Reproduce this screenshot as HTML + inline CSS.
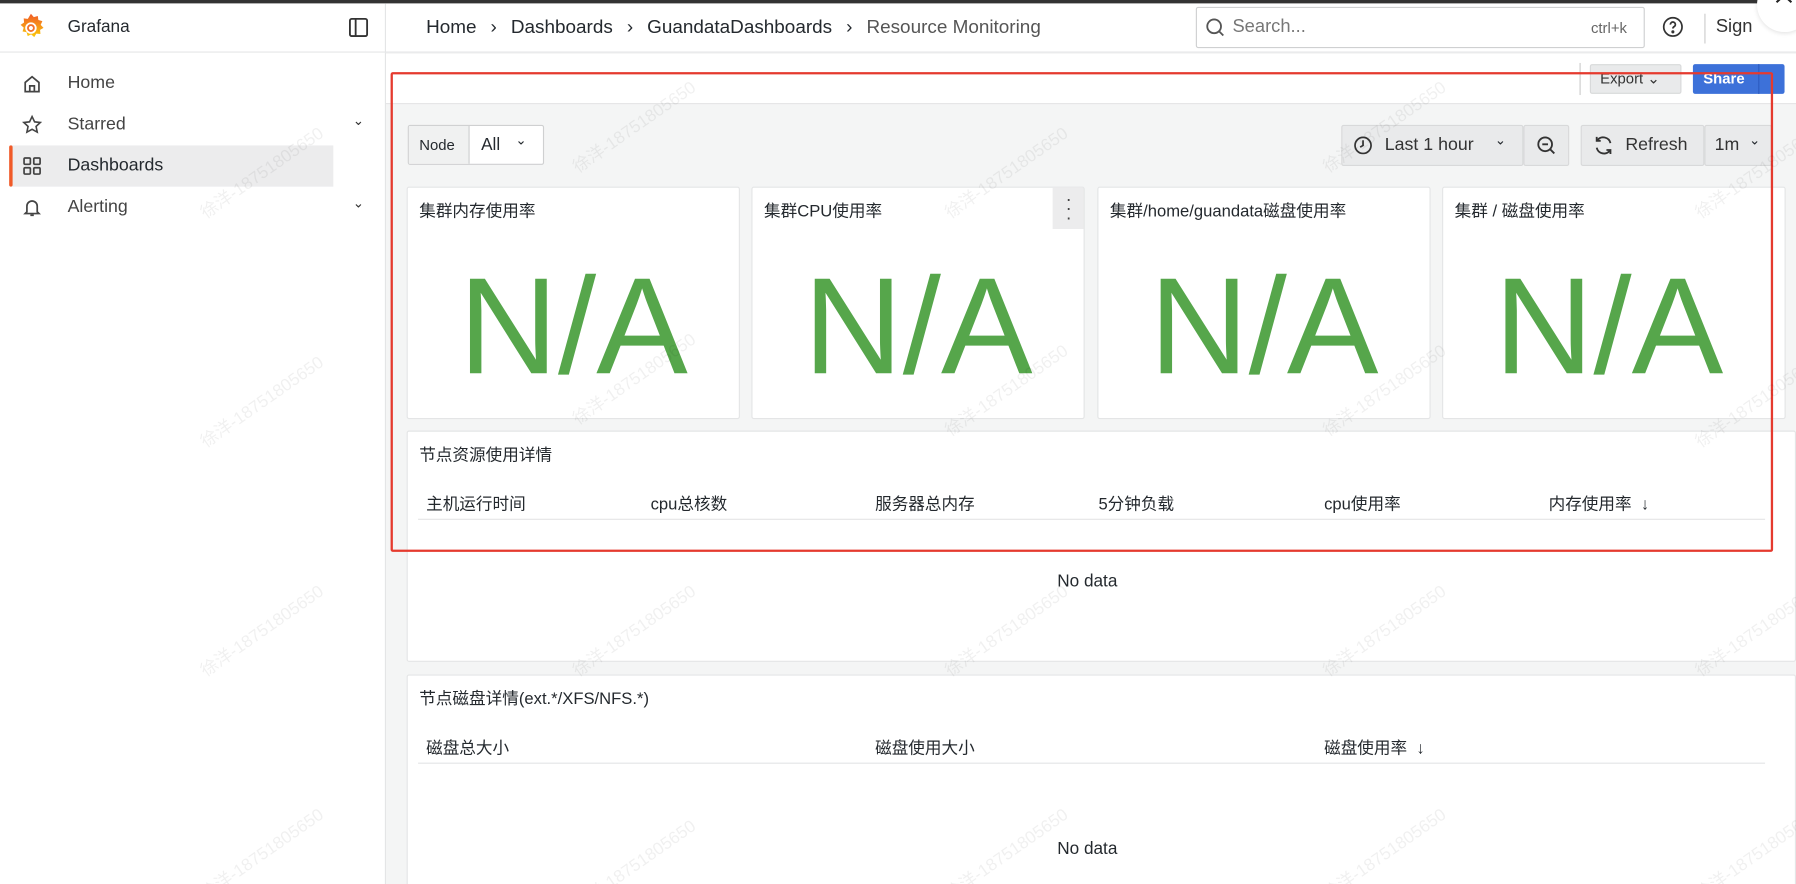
<!DOCTYPE html>
<html><head><meta charset="utf-8"><style>
*{box-sizing:border-box;margin:0;padding:0}
body{width:1796px;height:884px;overflow:hidden;background:#fff;font-family:"Liberation Sans","Noto Sans CJK SC",sans-serif;color:#24292e}
#w{position:absolute;left:0;top:0;width:1568px;height:772px;transform-origin:0 0;transform:scale(1.14541,1.14508);overflow:hidden;background:#f4f5f5}
.a{position:absolute}
.t{position:absolute;white-space:nowrap}
.panel{position:absolute;background:#fff;border:1px solid #e4e5e6;border-radius:2px}
.na{position:absolute;left:0;right:0;top:58px;text-align:center;color:#56a64b;font-size:120px;line-height:126px}
.pt{position:absolute;left:10px;top:9px;font-size:14.5px;color:#24292e}
.btn{position:absolute;background:#e9eaeb;border:1px solid #d8d9da;border-radius:2px}
.wm{position:absolute;color:rgba(0,0,0,0.06);font-size:15px;transform:rotate(-35deg);white-space:nowrap}
.th{position:absolute;top:52px;font-size:14.5px}
.sep{display:inline-block;width:30px;text-align:center}
</style></head><body><div id="w">
<div class="a" style="left:0;top:0;width:1568px;height:3px;background:#333"></div>
<div class="a" style="left:0;top:3px;width:1568px;height:43px;background:#fff;border-bottom:1px solid #e4e5e6"></div>
<div class="a" style="left:0;top:46px;width:337px;height:726px;background:#fff;border-right:1px solid #e4e5e6"></div>
<div class="a" style="left:336px;top:3px;width:1px;height:43px;background:#e4e5e6"></div>
<svg class="a" style="left:14px;top:11px" width="26" height="26" viewBox="0 0 26 26"><defs><linearGradient id="g" x1="0" y1="1" x2="0" y2="0"><stop offset="0" stop-color="#fbca0a"/><stop offset="1" stop-color="#f05a28"/></linearGradient></defs><path d="M13 1l2.5 3 3.5-1 .5 3.5 3.5 1-1.5 3.2 2.5 2.6-3 1.8.3 3.6-3.6-.3-1.8 3-2.7-2.4-3 1.5-1-3.4-3.5-.6 1-3.4-2.7-2.4 3-2-.3-3.6 3.6.4z" fill="url(#g)"/><circle cx="13" cy="13.5" r="5" fill="#fff"/><circle cx="13" cy="13.5" r="2.6" fill="none" stroke="#f3722c" stroke-width="1.6"/></svg>
<div class="t" style="left:59px;top:15px;font-size:15px">Grafana</div>
<svg class="a" style="left:304px;top:15px" width="18" height="18" viewBox="0 0 18 18"><rect x="1.5" y="1.5" width="15" height="15" rx="1.5" fill="none" stroke="#333" stroke-width="1.6"/><line x1="6.5" y1="2" x2="6.5" y2="16" stroke="#333" stroke-width="1.6"/></svg>
<div class="a" style="left:9px;top:127px;width:282px;height:36px;background:#ececed"></div>
<div class="a" style="left:8px;top:127px;width:3px;height:36px;background:#f05a28;border-radius:2px"></div>
<svg class="a" style="left:19px;top:64px" width="18" height="18" viewBox="0 0 18 18" fill="none" stroke="#444" stroke-width="1.5"><path d="M3 8l6-5 6 5v8H3z"/><path d="M7 16v-5h4v5"/></svg>
<svg class="a" style="left:19px;top:100px" width="18" height="18" viewBox="0 0 18 18" fill="none" stroke="#444" stroke-width="1.4"><path d="M9 1.8l2.2 4.6 5 .6-3.7 3.4 1 5-4.5-2.5-4.5 2.5 1-5L1.8 7l5-.6z"/></svg>
<svg class="a" style="left:19px;top:136px" width="18" height="18" viewBox="0 0 18 18" fill="none" stroke="#444" stroke-width="1.5"><rect x="2" y="2" width="5.5" height="5.5" rx="1"/><rect x="10.5" y="2" width="5.5" height="5.5" rx="1"/><rect x="2" y="10.5" width="5.5" height="5.5" rx="1"/><rect x="10.5" y="10.5" width="5.5" height="5.5" rx="1"/></svg>
<svg class="a" style="left:19px;top:172px" width="18" height="18" viewBox="0 0 18 18" fill="none" stroke="#444" stroke-width="1.5"><path d="M4.5 13V8a4.5 4.5 0 019 0v5l1.5 1.5H3z"/><path d="M7.5 16h3"/></svg>
<div class="t" style="left:59px;top:64px;font-size:15.5px;color:#444">Home</div>
<div class="t" style="left:59px;top:100px;font-size:15.5px;color:#444">Starred</div>
<div class="t" style="left:59px;top:136px;font-size:15.5px;color:#24292e">Dashboards</div>
<div class="t" style="left:59px;top:172px;font-size:15.5px;color:#444">Alerting</div>
<div class="t" style="left:308px;top:98px;font-size:12px;color:#333">&#8964;</div>
<div class="t" style="left:308px;top:170px;font-size:12px;color:#333">&#8964;</div>
<div class="t" style="left:372px;top:15px;font-size:16.5px;color:#24292e">Home<span class="sep">›</span>Dashboards<span class="sep">›</span>GuandataDashboards<span class="sep">›</span><span style="color:#555">Resource Monitoring</span></div>
<div class="a" style="left:1044px;top:6px;width:392px;height:36px;border:1px solid #cfd0d1;border-radius:2px;background:#fff"></div>
<svg class="a" style="left:1052px;top:15px" width="18" height="18" viewBox="0 0 18 18" fill="none" stroke="#555" stroke-width="1.6"><circle cx="8" cy="8" r="6"/><path d="M12.5 12.5L16 16"/></svg>
<div class="t" style="left:1076px;top:15px;font-size:16px;color:#777">Search...</div>
<div class="t" style="left:1389px;top:17px;font-size:13px;color:#666">ctrl+k</div>
<svg class="a" style="left:1451px;top:14px" width="19" height="19" viewBox="0 0 19 19" fill="none" stroke="#333" stroke-width="1.5"><circle cx="9.5" cy="9.5" r="8"/><path d="M7.3 7.5a2.2 2.2 0 114 1.2c-.8.6-1.8 1-1.8 2.2"/><circle cx="9.5" cy="13.8" r=".6" fill="#333"/></svg>
<div class="a" style="left:1488px;top:12px;width:1px;height:26px;background:#ccc"></div>
<div class="t" style="left:1498px;top:15px;font-size:16px;color:#333">Sign</div>
<div class="a" style="left:1534px;top:-20px;width:48px;height:48px;border-radius:50%;background:#fff;box-shadow:0 1px 4px rgba(0,0,0,.12)"></div>
<svg class="a" style="left:1549px;top:-4px" width="18" height="12" viewBox="0 0 18 12" stroke="#222" stroke-width="1.8"><path d="M2-6L15 6M15-6L2 6"/></svg>
<div class="a" style="left:337px;top:47px;width:1231px;height:44px;background:#fff;border-bottom:1px solid #e4e5e6"></div>
<div class="a" style="left:1379px;top:55px;width:1px;height:28px;background:#ccc"></div>
<div class="btn" style="left:1388px;top:56px;width:80px;height:26px"></div>
<div class="t" style="left:1397px;top:61px;font-size:13px;color:#333">Export ⌄</div>
<div class="a" style="left:1478px;top:56px;width:80px;height:26px;background:#3d71d9;border-radius:2px"></div>
<div class="a" style="left:1535px;top:56px;width:1px;height:26px;background:#2c5cc0"></div>
<div class="t" style="left:1487px;top:61px;font-size:13px;color:#fff;font-weight:bold">Share</div>
<div class="a" style="left:356px;top:109px;width:119px;height:35px;border:1px solid #cfd0d1;border-radius:2px;background:#fff"></div>
<div class="a" style="left:357px;top:110px;width:53px;height:33px;background:#f0f1f1;border-right:1px solid #cfd0d1"></div>
<div class="t" style="left:366px;top:119px;font-size:13px">Node</div>
<div class="t" style="left:420px;top:118px;font-size:15px">All</div>
<div class="t" style="left:450px;top:115px;font-size:12px">⌄</div>
<div class="btn" style="left:1171px;top:109px;width:159px;height:36px"></div>
<div class="btn" style="left:1330px;top:109px;width:40px;height:36px"></div>
<svg class="a" style="left:1181px;top:118px" width="18" height="18" viewBox="0 0 18 18" fill="none" stroke="#333" stroke-width="1.5"><circle cx="9" cy="9" r="7"/><path d="M9 4.5V9L6.5 10.5"/></svg>
<div class="t" style="left:1209px;top:118px;font-size:15.5px;color:#333">Last 1 hour</div>
<div class="t" style="left:1305px;top:115px;font-size:12px">⌄</div>
<svg class="a" style="left:1341px;top:118px" width="18" height="18" viewBox="0 0 18 18" fill="none" stroke="#333" stroke-width="1.6"><circle cx="8" cy="8" r="6"/><path d="M12.5 12.5L16 16M5.5 8h5"/></svg>
<div class="btn" style="left:1380px;top:109px;width:108px;height:36px"></div>
<div class="btn" style="left:1488px;top:109px;width:59px;height:36px"></div>
<svg class="a" style="left:1390px;top:117px" width="20" height="20" viewBox="0 0 20 20" fill="none" stroke="#333" stroke-width="1.6"><path d="M16 8a6.5 6.5 0 00-11.5-2.5M4 12a6.5 6.5 0 0011.5 2.5"/><path d="M4 2.5v3.5h3.5M16 17.5V14h-3.5"/></svg>
<div class="t" style="left:1419px;top:118px;font-size:15.5px;color:#333">Refresh</div>
<div class="t" style="left:1497px;top:118px;font-size:15.5px;color:#333">1m</div>
<div class="t" style="left:1527px;top:115px;font-size:12px">⌄</div>
<div class="panel" style="left:355px;top:163px;width:291px;height:203px"><div class="pt">集群内存使用率</div><div class="na">N/A</div></div>
<div class="panel" style="left:656px;top:163px;width:291px;height:203px"><div class="pt">集群CPU使用率</div><div class="na">N/A</div><div class="a" style="right:0;top:0;width:27px;height:36px;background:#ececed"></div><div class="t" style="right:10px;top:7px;font-size:16px;line-height:8px;color:#444;width:6px;text-align:center">·<br>·<br>·</div></div>
<div class="panel" style="left:958px;top:163px;width:291px;height:203px"><div class="pt">集群/home/guandata磁盘使用率</div><div class="na">N/A</div></div>
<div class="panel" style="left:1259px;top:163px;width:300px;height:203px"><div class="pt">集群 / 磁盘使用率</div><div class="na" style="right:9px">N/A</div></div>
<div class="panel" style="left:355px;top:376px;width:1213px;height:202px">
<div class="pt">节点资源使用详情</div>
<div class="th" style="left:16px">主机运行时间</div><div class="th" style="left:212px">cpu总核数</div><div class="th" style="left:408px">服务器总内存</div><div class="th" style="left:603px">5分钟负载</div><div class="th" style="left:800px">cpu使用率</div><div class="th" style="left:996px">内存使用率 &nbsp;↓</div>
<div class="a" style="left:9px;top:76px;width:1176px;height:1px;background:#e4e5e6"></div>
<div class="t" style="left:567px;top:122px;font-size:15px">No data</div>
</div>
<div class="panel" style="left:355px;top:589px;width:1213px;height:200px">
<div class="pt">节点磁盘详情(ext.*/XFS/NFS.*)</div>
<div class="th" style="left:16px">磁盘总大小</div><div class="th" style="left:408px">磁盘使用大小</div><div class="th" style="left:800px">磁盘使用率 &nbsp;↓</div>
<div class="a" style="left:9px;top:76px;width:1176px;height:1px;background:#e4e5e6"></div>
<div class="t" style="left:567px;top:143px;font-size:15px">No data</div>
</div>
<div class="a" style="left:341px;top:63px;width:1207px;height:419px;border:2.5px solid #e53a2e;border-radius:2px"></div>
<div class="wm" style="left:165px;top:140px">徐洋-18751805650</div>
<div class="wm" style="left:490px;top:100px">徐洋-18751805650</div>
<div class="wm" style="left:815px;top:140px">徐洋-18751805650</div>
<div class="wm" style="left:1145px;top:100px">徐洋-18751805650</div>
<div class="wm" style="left:1470px;top:140px">徐洋-18751805650</div>
<div class="wm" style="left:165px;top:340px">徐洋-18751805650</div>
<div class="wm" style="left:490px;top:320px">徐洋-18751805650</div>
<div class="wm" style="left:815px;top:330px">徐洋-18751805650</div>
<div class="wm" style="left:1145px;top:330px">徐洋-18751805650</div>
<div class="wm" style="left:1470px;top:340px">徐洋-18751805650</div>
<div class="wm" style="left:165px;top:540px">徐洋-18751805650</div>
<div class="wm" style="left:490px;top:540px">徐洋-18751805650</div>
<div class="wm" style="left:815px;top:540px">徐洋-18751805650</div>
<div class="wm" style="left:1145px;top:540px">徐洋-18751805650</div>
<div class="wm" style="left:1470px;top:540px">徐洋-18751805650</div>
<div class="wm" style="left:165px;top:735px">徐洋-18751805650</div>
<div class="wm" style="left:490px;top:745px">徐洋-18751805650</div>
<div class="wm" style="left:815px;top:735px">徐洋-18751805650</div>
<div class="wm" style="left:1145px;top:735px">徐洋-18751805650</div>
<div class="wm" style="left:1470px;top:735px">徐洋-18751805650</div>
</div></body></html>
